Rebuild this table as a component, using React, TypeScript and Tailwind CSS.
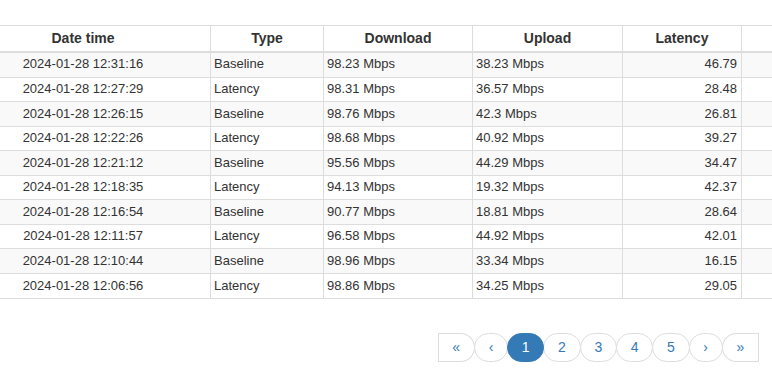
const rows = [
  ["2024-01-28 12:31:16", "Baseline", "98.23 Mbps", "38.23 Mbps", "46.79"],
  ["2024-01-28 12:27:29", "Latency", "98.31 Mbps", "36.57 Mbps", "28.48"],
  ["2024-01-28 12:26:15", "Baseline", "98.76 Mbps", "42.3 Mbps", "26.81"],
  ["2024-01-28 12:22:26", "Latency", "98.68 Mbps", "40.92 Mbps", "39.27"],
  ["2024-01-28 12:21:12", "Baseline", "95.56 Mbps", "44.29 Mbps", "34.47"],
  ["2024-01-28 12:18:35", "Latency", "94.13 Mbps", "19.32 Mbps", "42.37"],
  ["2024-01-28 12:16:54", "Baseline", "90.77 Mbps", "18.81 Mbps", "28.64"],
  ["2024-01-28 12:11:57", "Latency", "96.58 Mbps", "44.92 Mbps", "42.01"],
  ["2024-01-28 12:10:44", "Baseline", "98.96 Mbps", "33.34 Mbps", "16.15"],
  ["2024-01-28 12:06:56", "Latency", "98.86 Mbps", "34.25 Mbps", "29.05"],
];

const pages = ["«", "‹", "1", "2", "3", "4", "5", "›", "»"];

export default function App() {
  return (
    <div
      className="w-[772px] h-[386px] overflow-hidden bg-white pt-[25px] text-[#333]"
      style={{ fontFamily: '"Liberation Sans", Arial, sans-serif' }}
    >
      <table className="-ml-[45px] w-[900px] table-fixed border-collapse text-[13px] leading-[1.42857]">
        <colgroup>
          <col className="w-[255px]" />
          <col className="w-[113px]" />
          <col className="w-[149px]" />
          <col className="w-[150px]" />
          <col className="w-[119px]" />
          <col className="w-[114px]" />
        </colgroup>
        <thead>
          <tr className="text-[14px] font-bold">
            <th className="border border-b-2 border-[#ddd] py-[2.5px] text-center">Date time</th>
            <th className="border border-b-2 border-[#ddd] py-[2.5px] text-center">Type</th>
            <th className="border border-b-2 border-[#ddd] py-[2.5px] text-center">Download</th>
            <th className="border border-b-2 border-[#ddd] py-[2.5px] text-center">Upload</th>
            <th className="border border-b-2 border-[#ddd] py-[2.5px] text-center">Latency</th>
            <th className="border border-b-2 border-[#ddd] py-[2.5px]"></th>
          </tr>
        </thead>
        <tbody>
          {rows.map((r, i) => (
            <tr key={i} className={i % 2 === 0 ? "bg-[#f9f9f9]" : "bg-white"}>
              <td className="border border-[#ddd] px-[3px] py-[2.5px] text-center">{r[0]}</td>
              <td className="border border-[#ddd] px-[3px] py-[2.5px]">{r[1]}</td>
              <td className="border border-[#ddd] px-[3px] py-[2.5px]">{r[2]}</td>
              <td className="border border-[#ddd] px-[3px] py-[2.5px]">{r[3]}</td>
              <td className="border border-[#ddd] px-[4px] py-[2.5px] text-right">{r[4]}</td>
              <td className="border border-[#ddd] px-[3px] py-[2.5px]"></td>
            </tr>
          ))}
        </tbody>
      </table>

      <div className="mt-[34px] flex justify-end pr-[13px]">
        {pages.map((p, i) => {
          const first = i === 0;
          const last = i === pages.length - 1;
          const active = p === "1";
          return (
            <span
              key={p}
              className={
                "-ml-px flex h-[29px] items-center border px-[13.75px] text-[14px] " +
                (first ? "rounded-l-[4px] rounded-r-full " : last ? "rounded-l-full rounded-r-[4px] " : "rounded-full ") +
                (active ? "relative z-10 border-[#337ab7] bg-[#337ab7] text-white" : "border-[#ddd] bg-white text-[#337ab7]")
              }
            >
              {p}
            </span>
          );
        })}
      </div>
    </div>
  );
}
